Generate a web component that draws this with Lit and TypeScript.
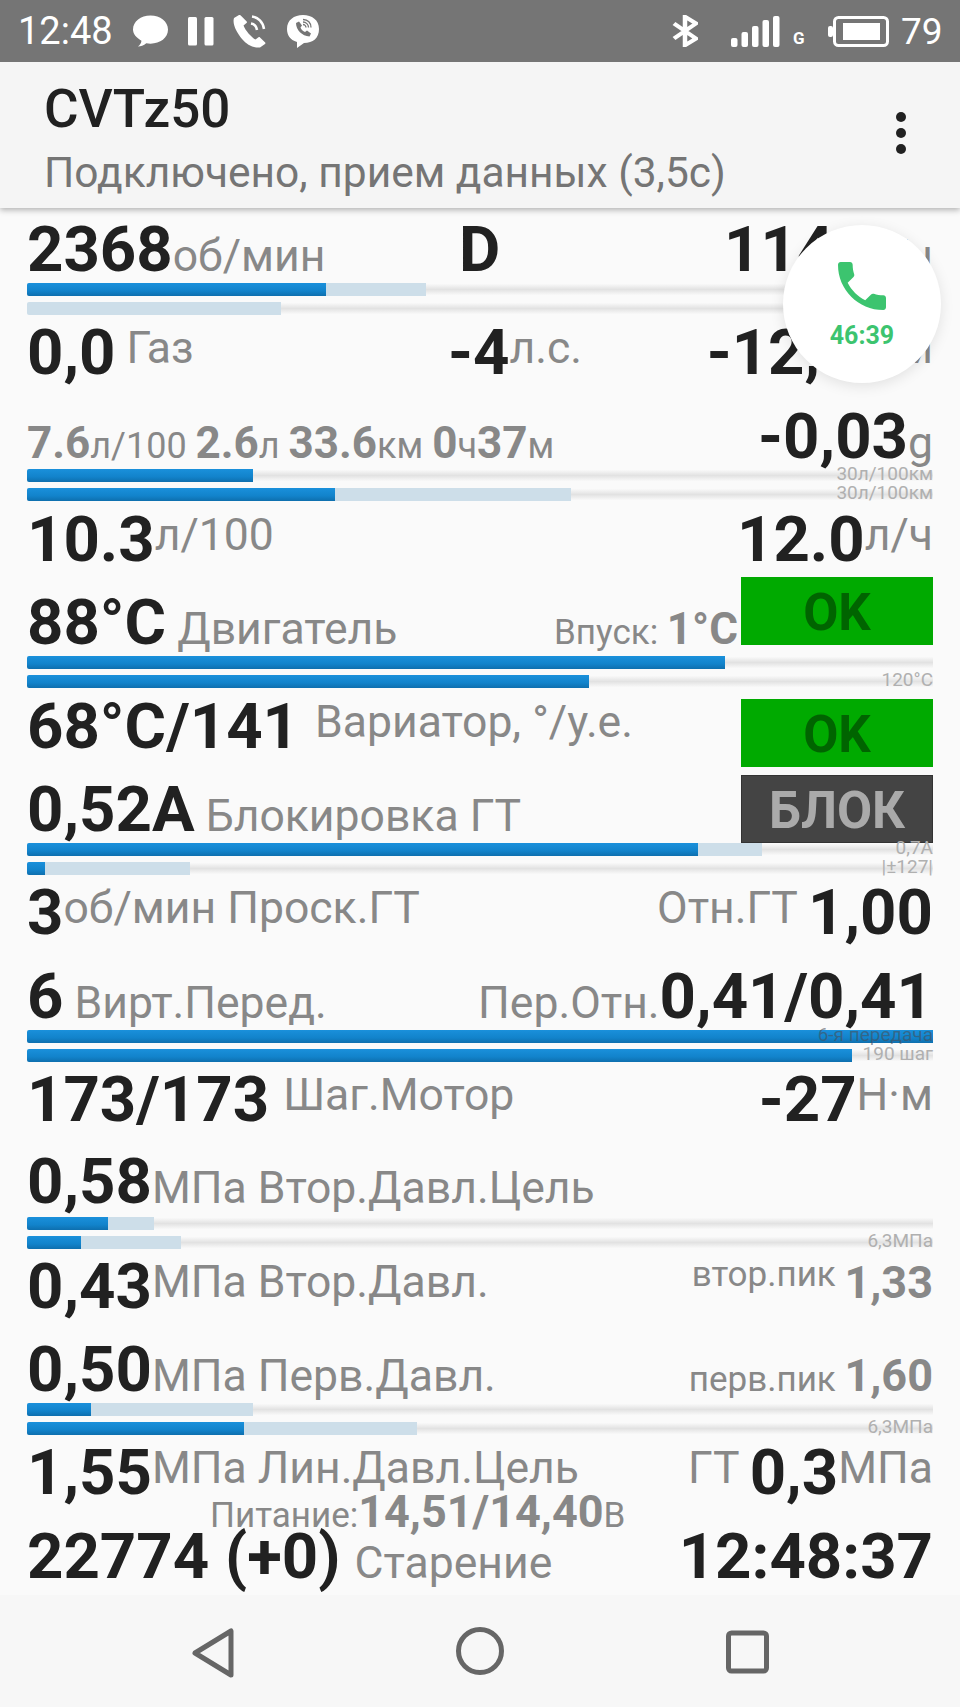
import { LitElement, html, css, svg } from "lit";
import { customElement } from "lit/decorators.js";

type Bar = { blue?: number; light?: number; label?: string; dark?: boolean };

const X0 = 27;
const W = 906;
const pct = (x?: number) => (x === undefined ? 0 : ((x - X0) / W) * 100);

const gauge = (h: number, a: Bar, b: Bar) => html`
  <div class="gauge" style="height:${h}px">
    ${[a, b].map(
      (g) => html`<div class="bar">
        ${g.light ? html`<i class="light" style="width:${pct(g.light)}%"></i>` : ""}
        ${g.blue ? html`<i class="blue" style="width:${pct(g.blue)}%"></i>` : ""}
        ${g.label ? html`<span class="tag ${g.dark ? "dark" : ""}">${g.label}</span>` : ""}
      </div>`
    )}
  </div>
`;

const row = (h: number, left: unknown, right: unknown = "", extra: unknown = "") => html`
  <div class="row" style="height:${h}px">
    <div>${left}</div>
    ${right ? html`<div>${right}</div>` : ""}
    ${extra}
  </div>
`;

const u = (t: string) => html`<span class="u">${t}</span>`;
const up = (t: string) => html`<span class="u up">${t}</span>`;
const s = (t: string) => html`<span class="s">${t}</span>`;
const g = (t: string) => html`<span class="g">${t}</span>`;

@customElement("app-root")
export class AppRoot extends LitElement {
  static styles = css`
    :host {
      display: block;
      width: 960px;
      height: 1707px;
      overflow: hidden;
      position: relative;
      background: #fafafa;
      font-family: Roboto, "Noto Sans", sans-serif;
    }
    .status {
      height: 62px;
      background: #757575;
      color: #fff;
      display: flex;
      align-items: center;
      padding: 0 20px 0 18px;
      font-size: 38px;
      position: relative;
      z-index: 3;
    }
    .status svg { display: block; flex: none; }
    .status .time { margin-right: 22px; width: 93px; }
    .status .push { flex: 1; }
    .status .net {
      font-size: 17px;
      font-weight: 700;
      width: 11px;
      margin-right: 24px;
      align-self: flex-end;
      padding-bottom: 17px;
      line-height: 13px;
    }
    .status .pct { font-size: 37px; width: 39px; }
    .appbar {
      height: 146px;
      box-sizing: border-box;
      background: #f5f5f5;
      padding: 18px 44px 0;
      position: relative;
      z-index: 2;
      box-shadow: 0 2px 6px rgba(0, 0, 0, 0.3);
      display: flex;
      justify-content: space-between;
    }
    .title { font-size: 53px; font-weight: 500; color: #212121; line-height: 58px; }
    .sub { font-size: 42.5px; color: #757575; line-height: 50px; margin-top: 10px; white-space: nowrap; }
    .more { display: flex; flex-direction: column; gap: 6px; margin: 32px 10px 0 0; }
    .more i { width: 10px; height: 10px; border-radius: 50%; background: #212121; display: block; }
    .content {
      height: 1387px;
      box-sizing: border-box;
      padding-top: 10px;
      overflow: hidden;
    }
    .row {
      display: flex;
      justify-content: space-between;
      align-items: baseline;
      padding: 0 27px;
      font-size: 63.5px;
      font-weight: 700;
      line-height: 64px;
      color: #212121;
      white-space: nowrap;
      position: relative;
    }
    .u, .s, .g, .p { line-height: 0; color: #888; }
    .u { font-size: 44.5px; font-weight: 400; }
    .up { vertical-align: 11px; }
    .s { font-size: 36px; font-weight: 400; }
    .p { font-size: 35px; font-weight: 400; }
    .g { font-size: 44px; font-weight: 700; }
    .g.lg { font-size: 45px; }
    .peak-l { vertical-align: 22px; }
    .peak-v { vertical-align: 10px; }
    .wide { margin-left: 5px; }
    .mid-gap { margin-left: 3px; }
    .gauge {
      padding: 0 27px;
    }
    .bar {
      height: 13px;
      margin-bottom: 6px;
      position: relative;
      border-radius: 2px;
      background: linear-gradient(180deg, transparent 5%, #e2e2e2 50%, transparent 95%);
    }
    .bar i { position: absolute; left: 0; top: 0; bottom: 0; border-radius: 2px 0 0 2px; display: block; }
    .light { background: #cddee9; }
    .blue { background: linear-gradient(180deg, #1a90db 0%, #1283cb 60%, #0e6fae 100%); }
    .tag {
      position: absolute;
      right: 0;
      bottom: -1px;
      font-size: 19px;
      line-height: 19px;
      color: #b0b0b0;
      white-space: nowrap;
    }
    .tag.dark { color: rgba(70, 80, 90, 0.6); }
    .box {
      position: absolute;
      right: 27px;
      width: 192px;
      height: 68px;
      box-sizing: border-box;
      padding-top: 3px;
      display: flex;
      align-items: center;
      justify-content: center;
      font-size: 51px;
      line-height: 64px;
      font-weight: 700;
    }
    .ok { background: #00aa00; color: #006400; }
    .blok { background: #444; color: #aaa; border: 1px solid #333; }
    .st5 { top: -14px; }
    .st6 { top: 4px; }
    .st7 { top: -3px; }
    .clear { display: inline-block; width: 195px; }
    .mid { position: absolute; top: 0; }
    .gear { left: 459px; }
    .power-mid { left: 448px; }
    .power { padding-left: 210px; justify-content: flex-start; }
    .nav {
      height: 112px;
      background: #f7f7f7;
      position: relative;
      z-index: 1;
    }
    .nav svg { display: block; }
    .fab {
      position: absolute;
      left: 783px;
      top: 225px;
      width: 158px;
      height: 158px;
      border-radius: 50%;
      background: #fff;
      box-shadow: 0 3px 14px rgba(0, 0, 0, 0.1);
      z-index: 1;
      display: flex;
      flex-direction: column;
      align-items: center;
      box-sizing: border-box;
      padding-top: 37px;
      color: #3cc46f;
      font-size: 25px;
      font-weight: 700;
      line-height: 26px;
    }
    .fab svg { display: block; margin-bottom: 13px; }
    .mr20 { margin-right: 20px; }
    .mr19 { margin-right: 19px; }
    .mr21 { margin-right: 21px; }
    .mr33 { margin-right: 33px; }
    .mr13 { margin-right: 13px; }
    .mr12 { margin-right: 12px; }
  `;

  render() {
    return html`
      <div class="status">
        <span class="time">12:48</span>
        ${svg`<svg class="mr20" width="35" height="34" viewBox="0 0 36 34"><path fill="#fff" d="M18 1c10 0 18 6 18 14.500S28 30 18 30c-1.500 0-3-.2-4.300-.4C11 32 8 33 5 33c2-1.500 3.500-3.500 3.700-6C3.500 24 0 20 0 15.500 0 7 8 1 18 1z"/></svg>`}
        ${svg`<svg class="mr19" width="26" height="29" viewBox="0 0 26 29"><rect x="0" y="0" width="9" height="28.500" rx="1.500" fill="#fff"/><rect x="16.500" y="0" width="9" height="28.500" rx="1.500" fill="#fff"/></svg>`}
        ${svg`<svg class="mr21" width="33" height="33" viewBox="0 0 33 33"><path fill="#fff" d="M6 0L1 3c-2 6 3 15 8 21s11 9 18 8.500l5-3.500c.5-.4.5-1 .2-1.500L27 22.500c-.4-.5-1-.5-1.500-.2l-3 2.200C19 23 12 15 10.500 10.500l3-2.500c.5-.4.6-1 .2-1.500L7.500.3C7.200 0 6.500-.2 6 0z"/><path fill="none" stroke="#fff" stroke-width="2.500" d="M18 8.500c3 .5 5.500 3 6 6.500M19 1.500c6 .8 11 5.500 12 12.500"/></svg>`}
        ${svg`<svg width="32" height="33" viewBox="0 0 32 33"><path fill="#fff" d="M16 0c9 0 16 5 16 14s-6 14-15 14l-7 5v-6C3 25 0 20 0 14 0 5 7 0 16 0z"/><path fill="#757575" d="M9 8l3-1.500 3 4-1.500 2c.7 2 2.500 3.800 4.500 4.500l2-1.500 4 3-1.500 3C15 21 9 15 9 8z"/><path fill="none" stroke="#757575" stroke-width="1.300" d="M16 7c3 0 5.500 2.500 5.500 5.500M16 4.500c5 0 8 3.500 8 8M16 9.500c1.500 0 3 1.500 3 3"/></svg>`}
        <span class="push"></span>
        ${svg`<svg class="mr33" width="26" height="32" viewBox="0 0 26 38" preserveAspectRatio="none"><path fill="none" stroke="#fff" stroke-width="4.500" d="M2 10l22 18-11 8V2l11 8L2 28"/></svg>`}
        ${svg`<svg class="mr13" width="49" height="31" viewBox="0 0 49 31">${[
          [0, 22, 9],
          [10.500, 16, 15],
          [21, 10, 21],
          [31.500, 4, 27],
          [42, 0, 31],
        ].map(([x, y, h]) => svg`<rect x=${x} y=${y} width="6.500" height=${h} rx="2" fill="#fff"/>`)}</svg>`}
        <span class="net">G</span>
        ${svg`<svg class="mr12" width="61" height="31" viewBox="0 0 61 31"><rect x="0" y="10" width="5" height="11" rx="2" fill="#fff"/><rect x="6.500" y="1.500" width="53" height="28" rx="4" fill="none" stroke="#fff" stroke-width="3"/><rect x="15" y="7" width="37" height="17" fill="#fff"/></svg>`}
        <span class="pct">79</span>
      </div>

      <div class="appbar">
        <div>
          <div class="title">CVTz50</div>
          <div class="sub">Подключено, прием данных (3,5с)</div>
        </div>
        <div class="more"><i></i><i></i><i></i></div>
      </div>

      <div class="content">
        ${row(65,
          html`2368${u("об/мин")}`,
          html`114${u("км/ч")}`,
          html`<div class="mid gear">D</div>`
        )}
        ${gauge(38, { blue: 326, light: 426 }, { light: 281 })}
        ${row(84,
          html`0,0${up(" Газ")}`,
          html`-12,0${up("Н·м")}`,
          html`<div class="mid power-mid">-4${up("л.с.")}</div>`
        )}
        ${row(64,
          html`${g("7.6")}${s("л/100 ")}${g("2.6")}${s("л ")}${g("33.6")}${s("км ")}${g("0")}${s("ч")}${g("37")}${s("м")}`,
          html`-0,03${u("g")}`
        )}
        ${gauge(39, { blue: 253, label: "30л/100км" }, { blue: 335, light: 571, label: "30л/100км" })}
        ${row(83, html`10.3${up("л/100")}`, html`12.0${up("л/ч")}`)}
        ${row(65,
          html`88°C${u(" Двигатель")}`,
          html`<span class="p">Впуск: </span>${g("1°C")}<span class="clear"></span>`,
          html`<div class="box ok st5">OK</div>`
        )}
        ${gauge(39, { blue: 725 }, { blue: 589, label: "120°C" })}
        ${row(83,
          html`68°C/141<span class="u up wide"> Вариатор, °/у.е.</span>`,
          "",
          html`<div class="box ok st6">OK</div>`
        )}
        ${row(65,
          html`0,52A${u(" Блокировка ГТ")}`,
          "",
          html`<div class="box blok st7">БЛОК</div>`
        )}
        ${gauge(38, { blue: 698, light: 762, label: "0,7A" }, { blue: 45, light: 190, label: "|±127|" })}
        ${row(84, html`3${up("об/мин Проск.ГТ")}`, html`${up("Отн.ГТ ")}1,00`)}
        ${row(65, html`6${u(" Вирт.Перед.")}`, html`${u("Пер.Отн.")}0,41/0,41`)}
        ${gauge(38, { blue: 933, label: "6-я передача", dark: true }, { blue: 852, label: "190 шаг" })}
        ${row(82, html`173/173<span class="u up mid-gap"> Шаг.Мотор</span>`, html`-27${up("Н·м")}`)}
        ${row(67, html`0,58${u("МПа Втор.Давл.Цель")}`)}
        ${gauge(38, { blue: 108, light: 154 }, { blue: 81, light: 181, label: "6,3МПа" })}
        ${row(83, html`0,43${up("МПа Втор.Давл.")}`, html`<span class="p peak-l">втор.пик </span><span class="g lg peak-v">1,33</span>`)}
        ${row(65, html`0,50${u("МПа Перв.Давл.")}`, html`<span class="p">перв.пик </span><span class="g lg">1,60</span>`)}
        ${gauge(38, { blue: 91, light: 253 }, { blue: 244, light: 417, label: "6,3МПа" })}
        ${row(33, html`1,55${up("МПа Лин.Давл.Цель")}`, html`${up("ГТ ")}0,3${up("МПа")}`)}
        <div class="row power" style="height:51px"><div><span class="p">Питание:</span><span class="g lg">14,51/14,40</span><span class="p">В</span></div></div>
        ${row(70, html`22774 (+0)<span class="u mid-gap"> Старение</span>`, html`12:48:37`)}
      </div>

      <div class="nav">
        ${svg`<svg width="960" height="112" viewBox="0 0 960 112"><path d="M231 36v44L195 58z" fill="none" stroke="#666" stroke-width="5" stroke-linejoin="round"/><circle cx="480" cy="56" r="21.500" fill="none" stroke="#666" stroke-width="5"/><rect x="728.500" y="38" width="38" height="38" rx="3" fill="none" stroke="#666" stroke-width="5"/></svg>`}
      </div>

      <div class="fab">
        ${svg`<svg width="48" height="48" viewBox="3 3 18 18"><path fill="#3cc46f" d="M6.620 10.790c1.440 2.830 3.760 5.140 6.590 6.590l2.200-2.200c.27-.27.67-.36 1.020-.24 1.120.37 2.330.57 3.570.57.550 0 1 .45 1 1V20c0 .55-.45 1-1 1-9.390 0-17-7.610-17-17 0-.55.45-1 1-1h3.500c.55 0 1 .45 1 1 0 1.250.2 2.450.57 3.570.11.350.03.740-.25 1.020l-2.200 2.200z"/></svg>`}
        <span>46:39</span>
      </div>
    `;
  }
}
